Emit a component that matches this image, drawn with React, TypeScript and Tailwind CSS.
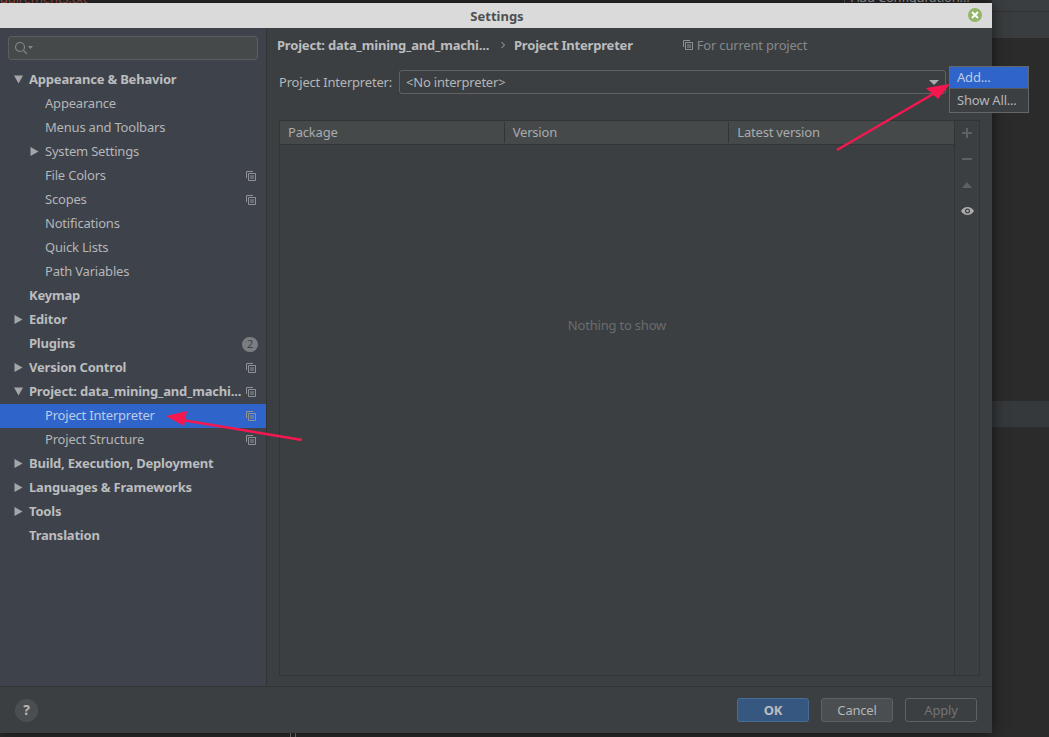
const TreeIcon = () => (
  <svg width="10" height="10" viewBox="0 0 10 10" fill="none" stroke="#8f9295" strokeWidth="1" className="shrink-0">
    <path d="M.5 7V.5H7" />
    <path d="M2.500 2.500h7v7h-7z" />
    <path d="M4 5h4M4 7h4" />
  </svg>
);

type Row = {
  label: string;
  bold?: boolean;
  arrow?: "down" | "right";
  child?: boolean;
  copy?: boolean;
  selected?: boolean;
  badge?: string;
};

const rows: Row[] = [
  { label: "Appearance & Behavior", bold: true, arrow: "down" },
  { label: "Appearance", child: true },
  { label: "Menus and Toolbars", child: true },
  { label: "System Settings", child: true, arrow: "right" },
  { label: "File Colors", child: true, copy: true },
  { label: "Scopes", child: true, copy: true },
  { label: "Notifications", child: true },
  { label: "Quick Lists", child: true },
  { label: "Path Variables", child: true },
  { label: "Keymap", bold: true },
  { label: "Editor", bold: true, arrow: "right" },
  { label: "Plugins", bold: true, badge: "2" },
  { label: "Version Control", bold: true, arrow: "right", copy: true },
  { label: "Project: data_mining_and_machi...", bold: true, arrow: "down", copy: true },
  { label: "Project Interpreter", child: true, copy: true, selected: true },
  { label: "Project Structure", child: true, copy: true },
  { label: "Build, Execution, Deployment", bold: true, arrow: "right" },
  { label: "Languages & Frameworks", bold: true, arrow: "right" },
  { label: "Tools", bold: true, arrow: "right" },
  { label: "Translation", bold: true },
];

const Arrow = ({ dir }: { dir: "down" | "right" }) => (
  <svg width="9" height="9" viewBox="0 0 9 9" fill="#a4a7aa" className="shrink-0">
    {dir === "down" ? <path d="M0 .5h9L4.500 8.500z" /> : <path d="M.5 0v9L8.500 4.500z" />}
  </svg>
);

const TreeRow = ({ row }: { row: Row }) => (
  <div className={`flex h-6 items-center pr-[10px] ${row.selected ? "bg-[#2f65ca]" : ""}`}>
    <div className={`flex items-center justify-end pb-[2px] ${row.child ? "w-[39px]" : "w-[23px]"}`}>
      {row.arrow && <Arrow dir={row.arrow} />}
    </div>
    <span
      className={`ml-[6px] min-w-0 flex-1 overflow-hidden whitespace-nowrap pb-[2px] ${
        row.bold ? "font-bold text-[#bbbdbf]" : row.selected ? "text-[#bccbe8]" : "text-[#b4b6b8]"
      }`}
    >
      {row.label}
    </span>
    {row.copy && <TreeIcon />}
    {row.badge && (
      <span className="mr-[-2px] flex h-[15px] w-4 items-center justify-center rounded-full bg-[#7b7e81] text-[11px] text-[#3d4047]">
        {row.badge}
      </span>
    )}
  </div>
);

const HeaderCell = ({ label, last }: { label: string; last?: boolean }) => (
  <div className="relative flex w-[225px] items-center pb-[2px] pl-2 text-[#a9abad]">
    {label}
    {!last && <div className="absolute right-0 top-px bottom-px w-px bg-[#323436]" />}
  </div>
);

export default function App() {
  return (
    <div
      className="relative flex h-[737px] w-[1049px] overflow-hidden bg-[#2b2b2b] text-[13px] leading-[16px] tracking-[-0.2px]"
      style={{ fontFamily: '"Noto Sans", "Open Sans", sans-serif' }}
    >
      {/* window behind the dialog */}
      <div className="absolute left-0 top-[-10px] text-[#b0544c]">quirements.txt</div>
      <div className="absolute left-[844px] top-[-11px] h-[14px] w-[128px] border-l border-[#55585a] pl-[6px] text-[#a9abad]">
        Add Configuration...
      </div>
      <div className="absolute left-[290px] top-[733px] h-1 w-[6px] border-x border-[#77797b]" />

      <div className="z-10 mt-[3px] flex h-[730px] w-[992px] shrink-0 flex-col shadow-[0_0_14px_rgba(0,0,0,0.6)]">
        <div className="flex h-[25px] items-center justify-center bg-[#dadada] pl-[2px] font-bold tracking-normal text-[#4f4f4f]">
          Settings
          <div className="absolute left-[968px] top-[8px] flex h-[14px] w-[14px] items-center justify-center rounded-full bg-[#93b567]">
            <svg width="8" height="8" viewBox="0 0 8 8" stroke="#fff" strokeWidth="1.8">
              <path d="M1 1l6 6M7 1l-6 6" />
            </svg>
          </div>
        </div>

        <div className="flex min-h-0 flex-1">
          {/* sidebar */}
          <div className="flex w-[267px] shrink-0 flex-col border-r border-[#323436] bg-[#3e424a]">
            <div className="mx-2 mb-[8px] mt-2 flex h-6 items-center rounded-[3px] border border-[#5b5d5e] bg-[#45494a] pl-[5px]">
              <svg width="20" height="14" viewBox="0 0 20 14" fill="none" stroke="#85888b" strokeWidth="1.1">
                <circle cx="6" cy="6" r="4.500" />
                <path d="M9.500 9.500l3.500 3.500" />
                <path d="M14 5h5l-2.500 3z" fill="#85888b" stroke="none" />
              </svg>
            </div>
            {rows.map((row) => (
              <TreeRow key={row.label} row={row} />
            ))}
          </div>

          {/* content */}
          <div className="flex min-w-0 flex-1 flex-col bg-[#3c3f41] pl-[12px] pr-[12px]">
            <div className="mt-[9px] flex h-[16px] items-center whitespace-nowrap">
              <span className="ml-[-2px] w-[220px] font-bold text-[#bbbdbf]">Project: data_mining_and_machi...</span>
              <svg width="6" height="8" viewBox="0 0 6 8" fill="none" stroke="#a9abad" className="ml-[3px]">
                <path d="M1.500 1l3 3-3 3" />
              </svg>
              <span className="ml-[8px] font-bold text-[#bbbdbf]">Project Interpreter</span>
              <span className="ml-[50px] flex items-center gap-[4px] text-[#85888a]">
                <TreeIcon />
                For current project
              </span>
            </div>

            <div className="mt-[17px] flex h-6 items-center">
              <span className="w-[120px] text-[#b4b6b8]">Project Interpreter:</span>
              <div className="flex h-6 w-[547px] items-center justify-between rounded-[3px] border border-[#5f6162] pl-[6px] pr-[6px] text-[#b4b6b8]">
                &lt;No interpreter&gt;
                <svg width="10" height="5" viewBox="0 0 10 5" fill="#a9abad">
                  <path d="M0 0h10L5 5z" />
                </svg>
              </div>
            </div>

            <div className="mb-[10px] mt-[26px] flex min-h-0 flex-1 border border-[#323436]">
              <div className="flex min-w-0 flex-1 flex-col">
                <div className="flex h-6 shrink-0 border-b border-[#323436] bg-[#45494a]">
                  <HeaderCell label="Package" />
                  <HeaderCell label="Version" />
                  <HeaderCell label="Latest version" last />
                </div>
                <div className="flex flex-1 justify-center pt-[172px] text-[#6a6c6e]">Nothing to show</div>
              </div>
              <div className="flex w-[25px] shrink-0 flex-col items-center gap-[14px] border-l border-[#323436] pt-[6px]">
                <svg width="12" height="12" viewBox="0 0 12 12" fill="#5e6163">
                  <path d="M5 1h2v4h4v2H7v4H5V7H1V5h4z" />
                </svg>
                <svg width="12" height="12" viewBox="0 0 12 12" fill="#5e6163">
                  <path d="M1 5h10v2H1z" />
                </svg>
                <svg width="12" height="12" viewBox="0 0 12 12" fill="#5e6163">
                  <path d="M1 9l5-6 5 6z" />
                </svg>
                <svg width="15" height="12" viewBox="0 0 14 12" fill="#a9abad">
                  <path fillRule="evenodd" d="M7 2c3 0 5.500 2 6.500 4-1 2-3.500 4-6.500 4S1.500 8 .5 6c1-2 3.500-4 6.500-4zm0 1.500a2.500 2.500 0 100 5 2.500 2.500 0 000-5z" />
                  <circle cx="7" cy="6" r="1.300" />
                </svg>
              </div>
            </div>
          </div>
        </div>

        {/* footer */}
        <div className="flex h-[47px] shrink-0 items-center border-t border-[#323436] bg-[#3c3f41] pl-[15px] pr-[15px]">
          <div className="flex h-[23px] w-[23px] items-center justify-center rounded-full border border-[#505355] bg-[#4b4e50] text-[14px] font-bold text-[#b4b6b8]">
            ?
          </div>
          <div className="ml-auto flex gap-[12px]">
            <div className="flex h-6 w-[72px] items-center justify-center rounded-[3px] border border-[#466d94] bg-[#365880] font-bold text-[#bbbdbf]">
              OK
            </div>
            <div className="flex h-6 w-[72px] items-center justify-center rounded-[3px] border border-[#5e6163] bg-[#4b4e50] text-[#b4b6b8]">
              Cancel
            </div>
            <div className="flex h-6 w-[72px] items-center justify-center rounded-[3px] border border-[#5e6163] text-[#717375]">
              Apply
            </div>
          </div>
        </div>
      </div>

      {/* IDE window to the right of the dialog */}
      <div className="flex min-w-0 flex-1 flex-col">
        <div className="h-[12px] border-b border-[#2f3132] bg-[#3b3e40]" />
        <div className="h-[26px] bg-[#3a3d3f]" />
        <div className="mt-[363px] h-[26px] bg-[#35393b]" />
      </div>

      {/* popup menu */}
      <div className="absolute left-[949px] top-[66px] z-20 w-[80px] border border-[#646668] bg-[#3c3f41] text-[#b4b6b8]">
        <div className="flex h-[21px] items-center bg-[#2f65ca] pb-[2px] pl-[7px] text-[#bccbe8]">Add...</div>
        <div className="h-px bg-[#55585a]" />
        <div className="flex h-[23px] items-center pb-[2px] pl-[7px]">Show All...</div>
      </div>

      {/* annotation arrows */}
      <svg width="1049" height="737" className="pointer-events-none absolute left-0 top-0 z-30">
        <g stroke="#f5174f" strokeWidth="2.500" fill="#f5174f">
          <path d="M837 150L940 90" />
          <path d="M950 84L926 88L938 99z" stroke="none" />
          <path d="M302 440L182 420" />
          <path d="M166 416L187 411L184 426z" stroke="none" />
        </g>
      </svg>
    </div>
  );
}
